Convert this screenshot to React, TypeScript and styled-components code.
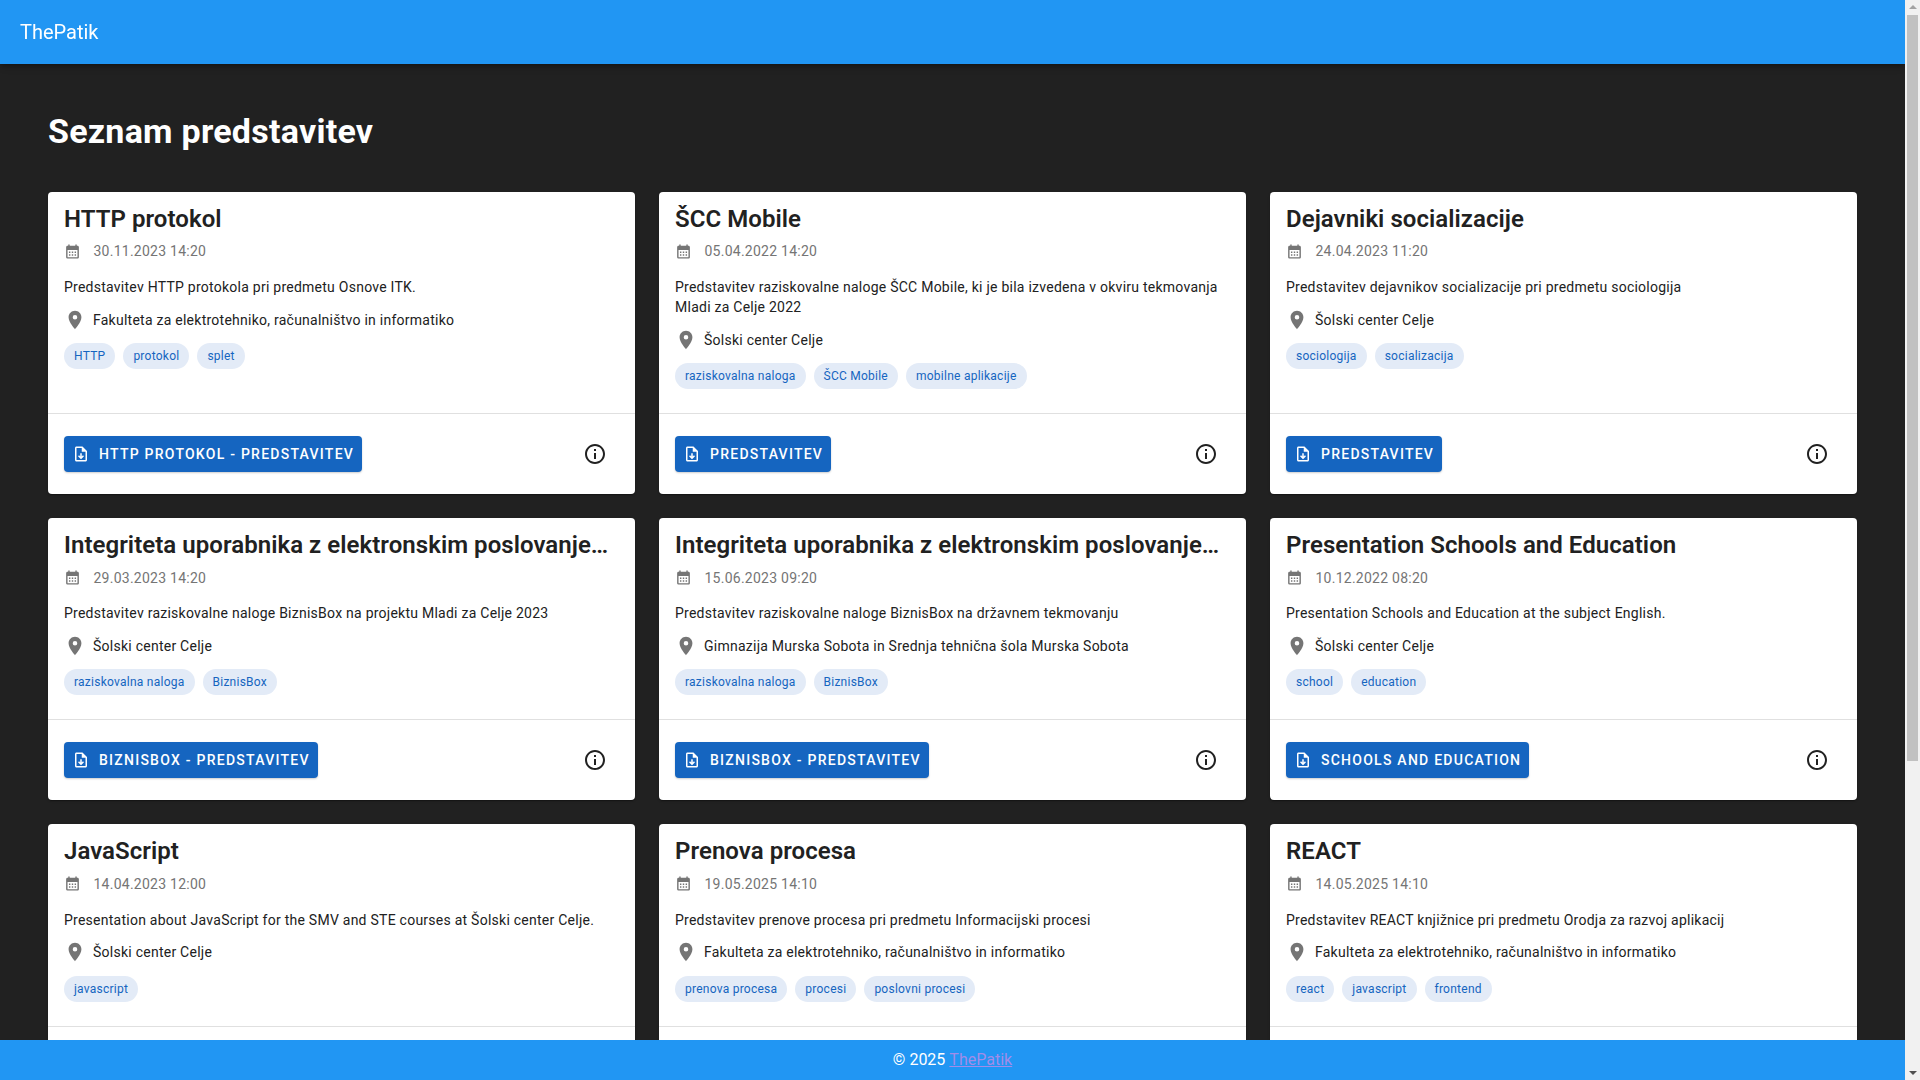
import React from "react";
import styled, {createGlobalStyle} from "styled-components";
import {MdCalendarMonth, MdOutlineInfo, MdPlace} from "react-icons/md";

const GlobalStyle = createGlobalStyle`
  * {
    box-sizing: border-box;
  }
  body {
    margin: 0;
    background-color: #212121;
    font-family: Roboto, "Liberation Sans", sans-serif;
  }
`
const AppBar = styled.header`
  position: fixed;
  top: 0;
  left: 0;
  right: 15px;
  z-index: 10;
  height: 64px;
  display: flex;
  align-items: center;
  padding: 0 20px;
  background-color: #2196f3;
  color: #fff;
  font-size: 20px;
  line-height: 32px;
  box-shadow: 0 2px 4px -1px rgba(0, 0, 0, .2), 0 4px 5px 0 rgba(0, 0, 0, .14), 0 1px 10px 0 rgba(0, 0, 0, .12);
`
const Main = styled.main`
  min-height: 1520px;
  padding: 64px 63px 0 48px;
`
const Title = styled.h1`
  margin: 0;
  padding: 46px 0 40px;
  color: #fff;
  font-size: 34px;
  line-height: 42px;
  font-weight: 700;
  letter-spacing: .25px;
`
const Grid = styled.div`
  display: grid;
  grid-template-columns: repeat(3, 1fr);
  gap: 24px;
`
const Card = styled.article`
  display: flex;
  flex-direction: column;
  min-width: 0;
  background-color: #fff;
  border-radius: 4px;
  box-shadow: 0 2px 1px -1px rgba(0, 0, 0, .2), 0 1px 1px 0 rgba(0, 0, 0, .14), 0 1px 3px 0 rgba(0, 0, 0, .12);
`
const Body = styled.div`
  flex: 1;
  padding: 11px 16px 24px;
`
const CardTitle = styled.h2`
  margin: 0;
  color: #212121;
  font-size: 24px;
  line-height: 32px;
  font-weight: 600;
  letter-spacing: .05px;
  white-space: nowrap;
  overflow: hidden;
  text-overflow: ellipsis;
`
const DateRow = styled.div`
  display: flex;
  align-items: center;
  gap: 12.5px;
  margin-top: 6.35px;
  color: #757575;
  font-size: 14px;
  line-height: 20px;
  letter-spacing: .25px;
  > svg {
    flex: none;
    font-size: 17px;
  }
`
const Description = styled.p`
  margin: 15.85px 0 0;
  color: #212121;
  font-size: 14px;
  line-height: 20px;
  letter-spacing: .25px;
`
const Location = styled.div`
  display: flex;
  align-items: center;
  gap: 7px;
  margin-top: 11.6px;
  color: #212121;
  font-size: 14px;
  line-height: 20px;
  letter-spacing: .25px;
  > svg {
    flex: none;
    font-size: 22px;
    color: #757575;
  }
`
const Tags = styled.div`
  display: flex;
  gap: 8px;
  margin-top: 12.4px;
`
const Tag = styled.span`
  height: 26px;
  padding: 0 10px;
  border-radius: 13px;
  background-color: #e3ebf7;
  color: #1565c0;
  font-size: 12px;
  line-height: 26px;
  letter-spacing: .25px;
`
const Actions = styled.div`
  display: flex;
  align-items: center;
  justify-content: space-between;
  padding: 20px 20px 20px 16px;
  border-top: 1px solid #e0e0e0;
`
const DownloadButton = styled.button`
  display: flex;
  align-items: center;
  gap: 9px;
  height: 36px;
  padding: 0 8px;
  border: 0;
  border-radius: 4px;
  background-color: #1565c0;
  color: #fff;
  font-family: inherit;
  font-size: 14px;
  font-weight: 500;
  letter-spacing: 1.25px;
  box-shadow: 0 1px 2px rgba(0, 0, 0, .2);
`
const InfoButton = styled.button`
  display: flex;
  align-items: center;
  justify-content: center;
  width: 40px;
  height: 40px;
  padding: 0;
  border: 0;
  background: none;
  color: #212121;
  font-size: 24px;
`
const Footer = styled.footer`
  position: fixed;
  bottom: 0;
  left: 0;
  right: 15px;
  z-index: 10;
  height: 40px;
  display: flex;
  align-items: center;
  justify-content: center;
  gap: 4px;
  padding-bottom: 2px;
  background-color: #2196f3;
  color: #fff;
  font-size: 16px;
  > a {
    color: #a28ce8;
  }
`
const ScrollBar = styled.div`
  position: fixed;
  top: 0;
  right: 0;
  bottom: 0;
  z-index: 20;
  width: 15px;
  display: flex;
  flex-direction: column;
  align-items: center;
  background-color: #f1f1f1;
`
const ScrollArrow = styled.div<{$down?: boolean}>`
  flex: none;
  width: 0;
  height: 0;
  margin: ${p => p.$down ? '6px 0 5px' : '5px 0 5px'};
  border-left: 4px solid transparent;
  border-right: 4px solid transparent;
  border-bottom: ${p => p.$down ? '0' : '4px solid #a3a3a3'};
  border-top: ${p => p.$down ? '4px solid #505050' : '0'};
`
const ScrollThumb = styled.div`
  flex: none;
  width: 11px;
  height: 746px;
  margin-top: 1px;
  background-color: #c1c1c1;
`
const ScrollGap = styled.div`
  flex: 1;
`

const FileDownloadIcon = () => (
    <svg width="18" height="18" viewBox="0 0 24 24" fill="currentColor">
        <path d="M14 2H6c-1.1 0-1.99.9-1.99 2L4 20c0 1.1.89 2 1.99 2H18c1.1 0 2-.9 2-2V8l-6-6zm4 18H6V4h7v5h5v11z"/>
        <path d="M16 15l-1.41-1.41L13 15.17V11h-2v4.17l-1.59-1.58L8 15l4 4z"/>
    </svg>
)

type Item = {
    title: string
    date: string
    text: string
    place: string
    tags: string[]
    file: string
}

const FERI = 'Fakulteta za elektrotehniko, računalništvo in informatiko'
const SCC = 'Šolski center Celje'

const items: Item[] = [
    {title: 'HTTP protokol', date: '30.11.2023 14:20', text: 'Predstavitev HTTP protokola pri predmetu Osnove ITK.', place: FERI, tags: ['HTTP', 'protokol', 'splet'], file: 'HTTP protokol - predstavitev'},
    {title: 'ŠCC Mobile', date: '05.04.2022 14:20', text: 'Predstavitev raziskovalne naloge ŠCC Mobile, ki je bila izvedena v okviru tekmovanja Mladi za Celje 2022', place: SCC, tags: ['raziskovalna naloga', 'ŠCC Mobile', 'mobilne aplikacije'], file: 'Predstavitev'},
    {title: 'Dejavniki socializacije', date: '24.04.2023 11:20', text: 'Predstavitev dejavnikov socializacije pri predmetu sociologija', place: SCC, tags: ['sociologija', 'socializacija'], file: 'Predstavitev'},
    {title: 'Integriteta uporabnika z elektronskim poslovanjem v podjetju', date: '29.03.2023 14:20', text: 'Predstavitev raziskovalne naloge BiznisBox na projektu Mladi za Celje 2023', place: SCC, tags: ['raziskovalna naloga', 'BiznisBox'], file: 'BiznisBox - predstavitev'},
    {title: 'Integriteta uporabnika z elektronskim poslovanjem v podjetju', date: '15.06.2023 09:20', text: 'Predstavitev raziskovalne naloge BiznisBox na državnem tekmovanju', place: 'Gimnazija Murska Sobota in Srednja tehnična šola Murska Sobota', tags: ['raziskovalna naloga', 'BiznisBox'], file: 'BiznisBox - predstavitev'},
    {title: 'Presentation Schools and Education', date: '10.12.2022 08:20', text: 'Presentation Schools and Education at the subject English.', place: SCC, tags: ['school', 'education'], file: 'Schools and Education'},
    {title: 'JavaScript', date: '14.04.2023 12:00', text: 'Presentation about JavaScript for the SMV and STE courses at Šolski center Celje.', place: SCC, tags: ['javascript'], file: 'Predstavitev'},
    {title: 'Prenova procesa', date: '19.05.2025 14:10', text: 'Predstavitev prenove procesa pri predmetu Informacijski procesi', place: FERI, tags: ['prenova procesa', 'procesi', 'poslovni procesi'], file: 'Predstavitev'},
    {title: 'REACT', date: '14.05.2025 14:10', text: 'Predstavitev REACT knjižnice pri predmetu Orodja za razvoj aplikacij', place: FERI, tags: ['react', 'javascript', 'frontend'], file: 'Predstavitev'},
]

const App = () => {
    return (
        <>
            <GlobalStyle/>
            <AppBar>ThePatik</AppBar>
            <Main>
                <Title>Seznam predstavitev</Title>
                <Grid>
                    {items.map((item, index) =>
                        <Card key={index}>
                            <Body>
                                <CardTitle>{item.title}</CardTitle>
                                <DateRow><MdCalendarMonth/>{item.date}</DateRow>
                                <Description>{item.text}</Description>
                                <Location><MdPlace/>{item.place}</Location>
                                <Tags>
                                    {item.tags.map(tag => <Tag key={tag}>{tag}</Tag>)}
                                </Tags>
                            </Body>
                            <Actions>
                                <DownloadButton><FileDownloadIcon/>{item.file.toUpperCase()}</DownloadButton>
                                <InfoButton><MdOutlineInfo/></InfoButton>
                            </Actions>
                        </Card>
                    )}
                </Grid>
            </Main>
            <Footer>© 2025 <a href="#">ThePatik</a></Footer>
            <ScrollBar>
                <ScrollArrow/>
                <ScrollThumb/>
                <ScrollGap/>
                <ScrollArrow $down/>
            </ScrollBar>
        </>
    );
}

export default App;
